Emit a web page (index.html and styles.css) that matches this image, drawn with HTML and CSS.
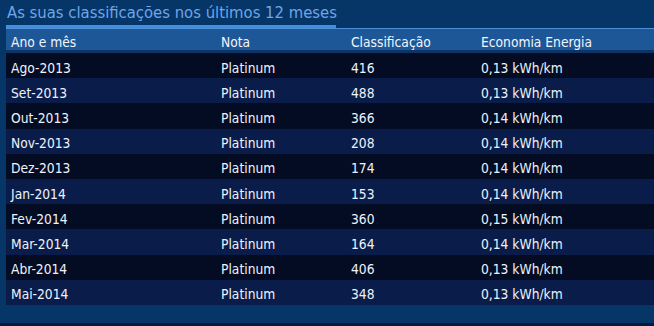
FILE: index.html
```html
<!DOCTYPE html>
<html lang="pt">
<head>
<meta charset="utf-8">
<title>Classificações</title>
<link rel="stylesheet" href="styles.css">
</head>
<body>
<div class="panel">
  <div class="tabs"><span class="tab">As suas classificações nos últimos 12 meses</span></div>
  <table class="grid">
    <thead>
      <tr><th class="c1">Ano e mês</th><th class="c2">Nota</th><th class="c3">Classificação</th><th class="c4">Economia Energia</th></tr>
    </thead>
    <tbody>
      <tr><td>Ago-2013</td><td>Platinum</td><td>416</td><td>0,13 kWh/km</td></tr>
      <tr><td>Set-2013</td><td>Platinum</td><td>488</td><td>0,13 kWh/km</td></tr>
      <tr><td>Out-2013</td><td>Platinum</td><td>366</td><td>0,14 kWh/km</td></tr>
      <tr><td>Nov-2013</td><td>Platinum</td><td>208</td><td>0,14 kWh/km</td></tr>
      <tr><td>Dez-2013</td><td>Platinum</td><td>174</td><td>0,14 kWh/km</td></tr>
      <tr><td>Jan-2014</td><td>Platinum</td><td>153</td><td>0,14 kWh/km</td></tr>
      <tr><td>Fev-2014</td><td>Platinum</td><td>360</td><td>0,15 kWh/km</td></tr>
      <tr><td>Mar-2014</td><td>Platinum</td><td>164</td><td>0,14 kWh/km</td></tr>
      <tr><td>Abr-2014</td><td>Platinum</td><td>406</td><td>0,13 kWh/km</td></tr>
      <tr><td>Mai-2014</td><td>Platinum</td><td>348</td><td>0,13 kWh/km</td></tr>
    </tbody>
  </table>
</div>
</body>
</html>
```
FILE: styles.css
```css
html, body {
  margin: 0;
  padding: 0;
  background: #03204a;
}
body {
  width: 654px;
  height: 326px;
  overflow: hidden;
  font-family: "DejaVu Sans Condensed", "DejaVu Sans", Tahoma, sans-serif;
}
.panel {
  height: 323px;
  background: #063568;
  border-bottom: 3px solid #021a3c;
  padding-left: 6px;
}
.tabs {
  height: 28px;
  display: flex;
  align-items: flex-end;
}
.tab {
  display: block;
  width: 329px;
  padding-left: 1px;
  font-size: 16.5px;
  line-height: 20px;
  color: #6ea6e6;
  white-space: nowrap;
  border-bottom: 3px solid #3f8fe2;
  padding-bottom: 2px;
}
.grid {
  width: 648px;
  border-collapse: separate;
  border-spacing: 0;
  table-layout: fixed;
  color: #eef2fa;
  font-size: 13.7px;
}
.grid th {
  box-sizing: border-box;
  font-weight: normal;
  text-align: left;
  height: 25px;
  padding: 5px 0 0 5px;
  color: #f2f5fb;
  background: #1e5798;
  border-top: 1px solid #4f8fd4;
  border-bottom: 3px solid #0d3466;
}
.c1 { width: 210px; }
.c2 { width: 130px; }
.c3 { width: 130px; }
.c4 { width: auto; }
.grid td {
  box-sizing: border-box;
  height: 25.2px;
  padding: 4px 0 0 5px;
  white-space: nowrap;
}
.grid tbody tr:nth-child(odd) { background: #040c24; }
.grid tbody tr:nth-child(even) { background: #0a1d4a; }
```
